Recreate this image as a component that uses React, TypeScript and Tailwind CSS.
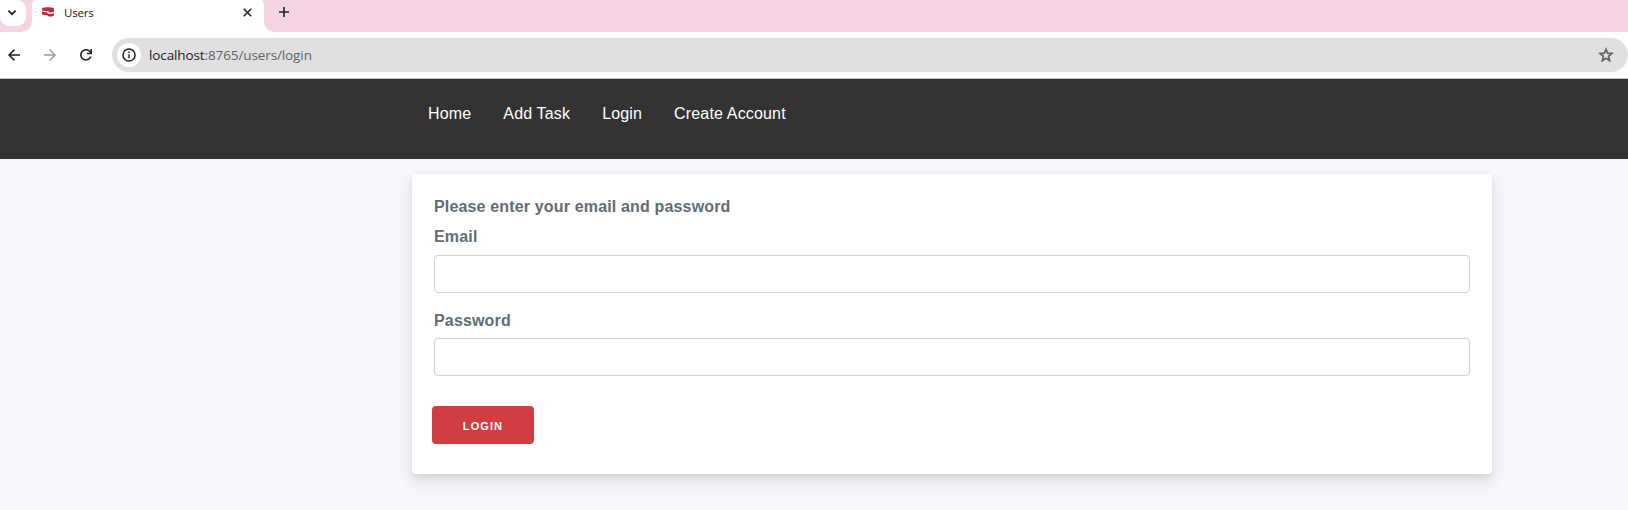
import React from "react";

const navItems = ["Home", "Add Task", "Login", "Create Account"];

function TabStrip() {
  return (
    <div className="flex h-8 bg-white">
      <div className="h-8 w-8 shrink-0 rounded-br-[10px] bg-[#f5d5e4]">
        <button aria-label="Search tabs" className="flex h-[26px] w-[26px] items-center justify-center rounded-b-[9px] rounded-tr-[9px] bg-white pr-[2px]">
          <svg width="10" height="8" viewBox="0 0 10 8" fill="none" stroke="#202124" strokeWidth="1.7">
            <path d="M1.4 1.6 5 5.200l3.600-3.600" />
          </svg>
        </button>
      </div>
      <div className="h-8 w-[232px] shrink-0 overflow-hidden bg-[#f5d5e4]">
        <div className="-mt-1 flex h-9 items-center rounded-t-[10px] bg-white pr-[12px] pl-[10px]">
          <svg className="-mt-[4px]" width="12" height="10" viewBox="0 0 12 10" fill="#c9283a">
            <path d="M0 1.500C1.600.5 4 .3 6 .3s4.500.2 6 1.200v3c-.8.700-2.600 1-4.600.9L6.200 4.100C3.600 4.300 1 4.100 0 3.600z" />
            <path d="M0 4.600c1.100.6 3 .8 5 .7L6.400 6.900c2.300.1 4.400-.2 5.600-1v2.500C11 9.400 8.800 9.700 6.700 9.600L5.300 8.200C3 8.300.9 8 0 7.400z" />
          </svg>
          <span className="mt-[-3px] ml-[10px] flex-1 font-['Open_Sans',sans-serif] text-[11.5px] tracking-[-0.2px] text-[#202124]">Users</span>
          <svg className="-mt-[4px]" width="9" height="9" viewBox="0 0 9 9" stroke="#202124" strokeWidth="1.6">
            <path d="M.8.8 8.200 8.200M8.200.8.8 8.200" />
          </svg>
        </div>
      </div>
      <div className="h-8 flex-1 rounded-bl-[10px] bg-[#f5d5e4] pt-[7px] pl-[15px]">
        <svg width="10" height="10" viewBox="0 0 10 10" stroke="#202124" strokeWidth="1.600">
          <path d="M5 0v10M0 5h10" />
        </svg>
      </div>
    </div>
  );
}

function Toolbar() {
  return (
    <div className="flex h-[47px] items-start border-b border-[#c4c4c4] bg-white pt-[6px]">
      <div className="flex h-[34px] w-28 shrink-0 items-center pl-2">
        <svg width="12" height="12" viewBox="0 0 12 12" fill="none" stroke="#202124" strokeWidth="1.5">
          <path d="M12 6H1.200M6.400.6 1 6l5.400 5.400" />
        </svg>
        <svg className="ml-6" width="12" height="12" viewBox="0 0 12 12" fill="none" stroke="#9c9c9c" strokeWidth="1.400">
          <path d="M0 6h10.800M5.600.6 11 6l-5.400 5.400" />
        </svg>
        <svg className="ml-6" width="12" height="12" viewBox="0 0 12 12" fill="none" stroke="#202124" strokeWidth="1.600">
          <path d="M10.800 7.500A5.100 5.100 0 1 1 9.900 2.600L11 4" />
          <path d="M11.200 0v4.500H6.800" />
        </svg>
      </div>
      <div className="flex h-[34px] flex-1 items-center rounded-full bg-[#e0e0e0] pr-[14px] pl-[5px]">
        <div className="flex h-6 w-6 items-center justify-center rounded-full bg-white">
          <svg width="14" height="14" viewBox="0 0 14 14" fill="none" stroke="#202124" strokeWidth="1.500">
            <circle cx="7" cy="7" r="6.100" />
            <path d="M7 6.200v4.100M7 3.600v1.500" />
          </svg>
        </div>
        <span className="ml-2 flex-1 font-['Open_Sans',sans-serif] text-[13.5px] tracking-[-0.11px] text-[#5f6368]">
          <span className="text-[#202124]">localhost</span>:8765/users/login
        </span>
        <svg width="16" height="16" viewBox="0 0 16 16" fill="none" stroke="#5f6368" strokeWidth="1.700">
          <path d="m8 2.200 1.600 4 4.300.3-3.300 2.800 1.050 4.300L8 11.300l-3.650 2.300L5.400 9.300 2.100 6.500l4.300-.3z" />
        </svg>
      </div>
    </div>
  );
}

export default function App() {
  return (
    <div className="h-[510px] w-full overflow-hidden bg-[#f5f7fa] font-['Liberation_Sans',Arial,sans-serif] text-[16px] tracking-[0.16px]">
      <TabStrip />
      <Toolbar />
      <nav className="flex h-20 gap-8 bg-[#333333] pt-[23px] pl-[428px] leading-6 text-white">
        {navItems.map((item) => (
          <a key={item}>{item}</a>
        ))}
      </nav>
      <main className="mt-[15px] ml-[412px] h-[300px] w-[1080px] rounded bg-white px-[22px] pt-[18px] font-bold text-[#606c76] shadow-[0_7px_14px_0_rgba(60,66,87,0.13),0_3px_6px_0_rgba(0,0,0,0.07)]">
        <p className="h-[30px] leading-[30px]">Please enter your email and password</p>
        <label htmlFor="email" className="block h-[33px] leading-[30px]">Email</label>
        <input id="email" type="email" className="block h-[38px] w-full rounded border border-[#d1d1d1] px-[10px] font-normal outline-none" />
        <label htmlFor="password" className="mt-[14px] block h-[31px] leading-[28px]">Password</label>
        <input id="password" type="password" className="block h-[38px] w-full rounded border border-[#d1d1d1] px-[10px] font-normal outline-none" />
        <button className="mt-[30px] -ml-[2px] h-[38px] w-[102px] rounded bg-[#d33c43] pt-[2px] text-[11px] tracking-[1.1px] text-white">LOGIN</button>
      </main>
    </div>
  );
}
